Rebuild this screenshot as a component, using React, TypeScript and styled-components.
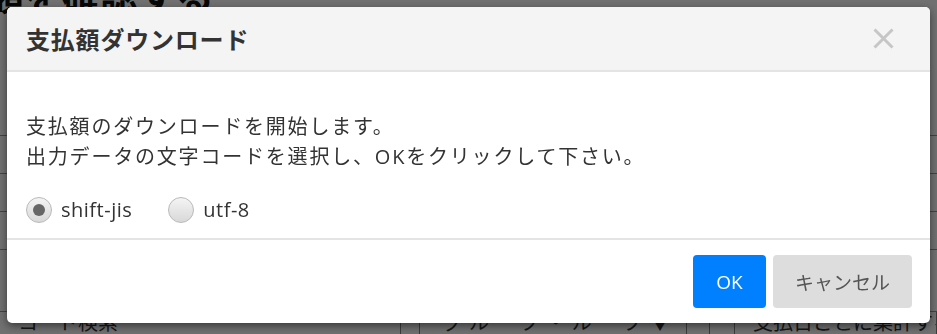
import React, { useState } from 'react';
import styled, { createGlobalStyle } from 'styled-components';

const GlobalStyle = createGlobalStyle`
    html, body {
        margin: 0;
        padding: 0;
        background: #ffffff;
    }
    body {
        font-family: "Open Sans", "Noto Sans CJK JP", sans-serif;
        color: #333333;
        overflow: hidden;
    }
`;

const App: React.FC = () => {
    const [charset, setCharset] = useState<string>('shift-jis');

    return (
        <>
            <GlobalStyle />
            <Page aria-hidden="true">
                <PageTitle>額を確認する</PageTitle>
                <TableRows>
                    <TableRow />
                    <TableRow />
                    <TableRow />
                    <TableRow />
                </TableRows>
                <SearchRow>
                    <SearchCell>コード検索</SearchCell>
                    <SearchCell />
                    <SelectCell>
                        <span>グループ・ループ</span>
                        <span>▼</span>
                    </SelectCell>
                    <SearchCell />
                    <SearchCell />
                    <SearchCell>支払日ごとに集計する</SearchCell>
                </SearchRow>
            </Page>
            <Backdrop />
            <Modal role="dialog" aria-labelledby="dl-title">
                <ModalHeader>
                    <ModalTitle id="dl-title">支払額ダウンロード</ModalTitle>
                    <CloseButton type="button" aria-label="閉じる">
                        <svg width="21" height="21" viewBox="0 0 21 21">
                            <path d="M1.5 1.5 L19.5 19.5 M19.5 1.5 L1.5 19.5" stroke="currentColor" strokeWidth="3" />
                        </svg>
                    </CloseButton>
                </ModalHeader>
                <ModalBody>
                    <Message>
                        支払額のダウンロードを開始します。<br />
                        出力データの文字コードを選択し、OKをクリックして下さい。
                    </Message>
                    <RadioGroup>
                        {['shift-jis', 'utf-8'].map((value) => (
                            <RadioLabel key={value}>
                                <RadioInput
                                    type="radio"
                                    name="charset"
                                    value={value}
                                    checked={charset === value}
                                    onChange={() => setCharset(value)}
                                />
                                {value}
                            </RadioLabel>
                        ))}
                    </RadioGroup>
                </ModalBody>
                <ModalFooter>
                    <Button variant="primary" type="button">OK</Button>
                    <Button variant="secondary" type="button">キャンセル</Button>
                </ModalFooter>
            </Modal>
        </>
    );
};

export default App;

const Page = styled.div`
    width: 937px;
    height: 334px;
    overflow: hidden;
    box-sizing: border-box;
    display: flex;
    flex-direction: column;
`

const PageTitle = styled.h1`
    margin: -25px 0 0 -14px;
    font-size: 38px;
    line-height: 40px;
    font-weight: bold;
    color: #111;
    white-space: nowrap;
`

const TableRows = styled.div`
    margin-top: 120px;
    display: flex;
    flex-direction: column;
`

const TableRow = styled.div`
    height: 37px;
    border-top: 1px solid #999;
`

const SearchRow = styled.div`
    margin-top: auto;
    display: grid;
    grid-template-columns: 401px 16px 270px 23px 25px 1fr;
    height: 22px;
    border-top: 1px solid #999;
`

const SearchCell = styled.div`
    font-size: 20px;
    line-height: 22px;
    padding-left: 18px;
    border-right: 1px solid #888;
    white-space: nowrap;
    overflow: hidden;
`

const SelectCell = styled(SearchCell)`
    display: flex;
    justify-content: space-between;
    padding: 0 10px 0 26px;
    letter-spacing: 6px;
`

const Backdrop = styled.div`
    position: fixed;
    inset: 0;
    background: rgba(0, 0, 0, 0.56);
`

const Modal = styled.div`
    position: fixed;
    top: 7px;
    left: 7px;
    width: 923px;
    background: #ffffff;
    border-radius: 5px;
    box-shadow: 0 3px 9px rgba(0, 0, 0, 0.5);
    overflow: hidden;
`

const ModalHeader = styled.div`
    height: 65px;
    box-sizing: border-box;
    background: #f4f4f4;
    border-bottom: 2px solid #e4e4e4;
    display: flex;
    align-items: center;
    justify-content: space-between;
    padding: 0 36px 0 19px;
`

const ModalTitle = styled.h2`
    margin: 0;
    font-size: 24px;
    line-height: 30px;
    font-weight: bold;
    letter-spacing: 0.8px;
    color: #333333;
    font-family: "Noto Sans CJK JP", sans-serif;
`

const CloseButton = styled.button`
    border: 0;
    padding: 0;
    background: transparent;
    color: #c6c6c6;
    width: 21px;
    height: 21px;
    cursor: pointer;
    display: flex;
`

const ModalBody = styled.div`
    padding: 40px 19px 14px;
    border-bottom: 2px solid #e4e4e4;
`

const Message = styled.p`
    margin: 0;
    font-size: 20px;
    line-height: 30px;
    letter-spacing: 1.8px;
    color: #333333;
`

const RadioGroup = styled.div`
    margin-top: 24px;
    display: flex;
    align-items: center;
    gap: 36px;
`

const RadioLabel = styled.label`
    display: flex;
    align-items: center;
    gap: 9px;
    font-size: 20px;
    line-height: 28px;
    letter-spacing: 0.5px;
    color: #333333;
    cursor: pointer;
`

const RadioInput = styled.input`
    appearance: none;
    margin: 0;
    width: 26px;
    height: 26px;
    border-radius: 50%;
    border: 1px solid #b9b9b9;
    background: linear-gradient(#f4f4f4, #d8d8d8);
    box-sizing: border-box;
    display: grid;
    place-items: center;
    cursor: pointer;

    &:checked::after {
        content: '';
        width: 12px;
        height: 12px;
        border-radius: 50%;
        background: #666666;
    }
`

const ModalFooter = styled.div`
    padding: 15px 18px 15px;
    display: flex;
    justify-content: flex-end;
    gap: 7px;
`

const Button = styled.button<{ variant: 'primary' | 'secondary' }>`
    height: 53px;
    border: 0;
    border-radius: 4px;
    font-family: "Open Sans", "Noto Sans CJK JP", sans-serif;
    font-size: 19px;
    padding: 0;
    width: ${(p) => (p.variant === 'primary' ? 73 : 139)}px;
    background: ${(p) => (p.variant === 'primary' ? '#007fff' : '#dddddd')};
    color: ${(p) => (p.variant === 'primary' ? '#ffffff' : '#555555')};
    cursor: pointer;
`
